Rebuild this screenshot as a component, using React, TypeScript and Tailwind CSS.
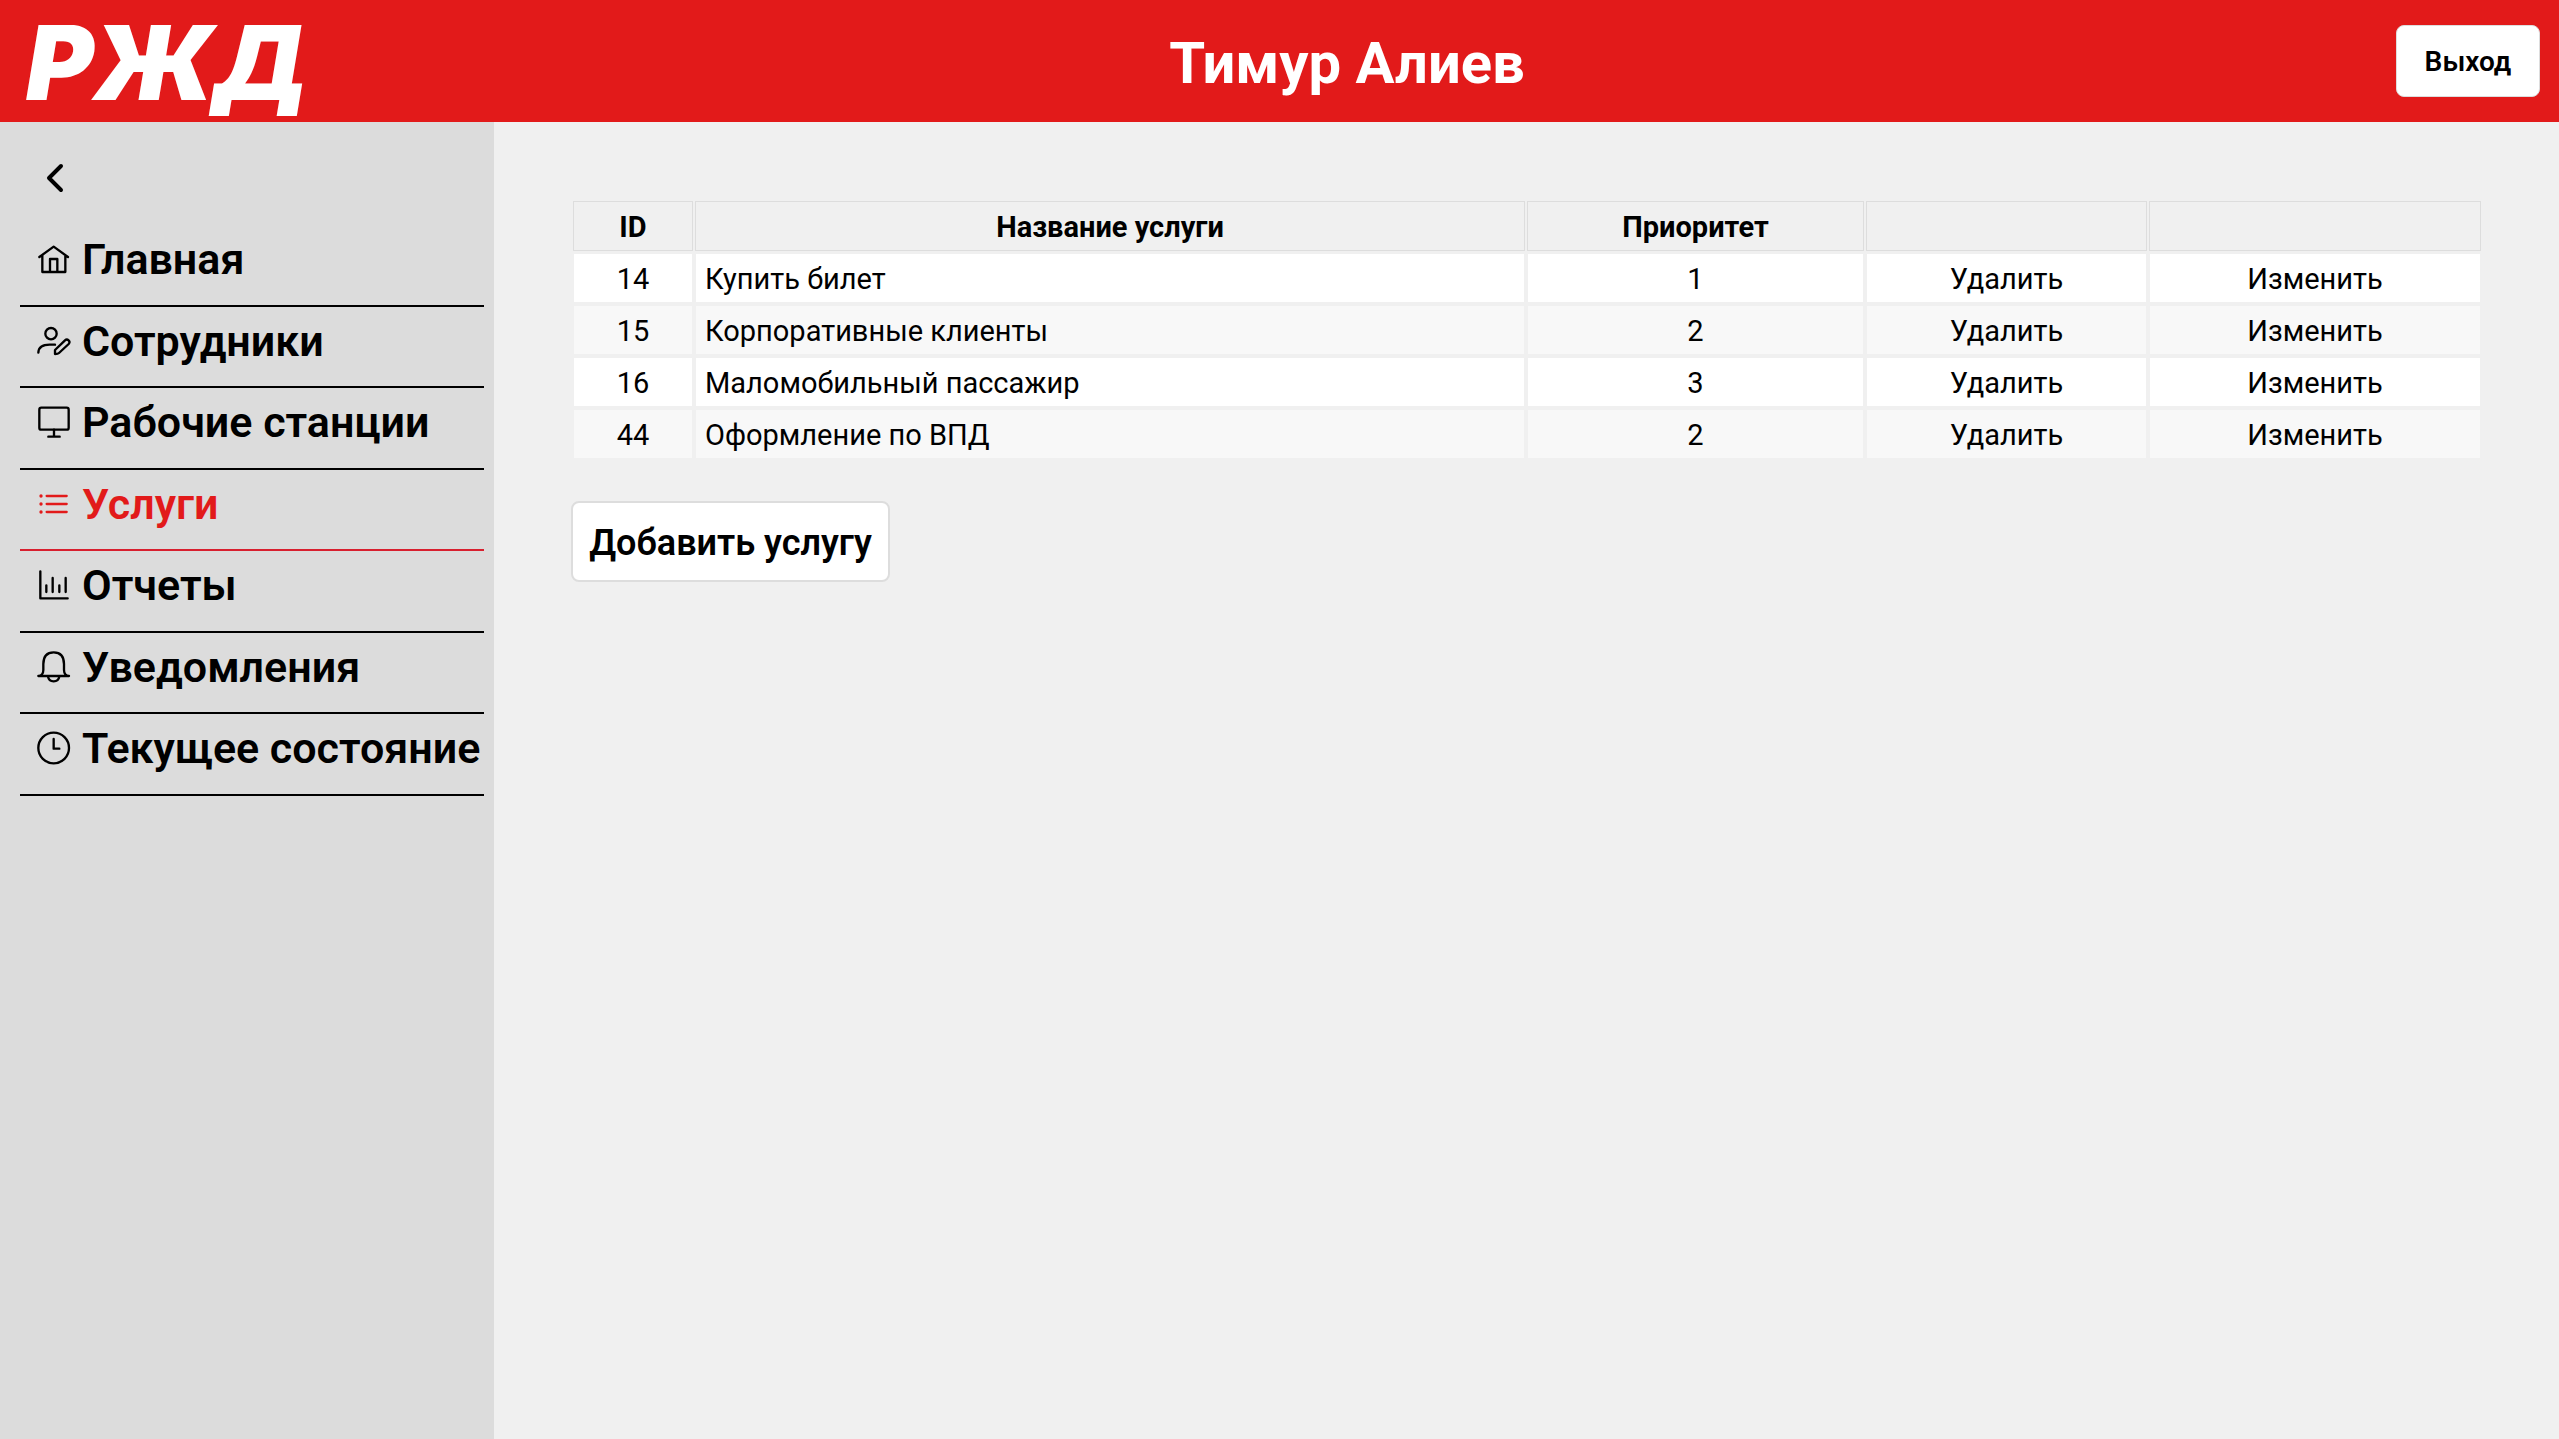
import type { ReactNode } from "react";

type NavItem = { label: string; icon: ReactNode; active?: boolean };

function Icon({ children }: { children: ReactNode }) {
  return (
    <svg
      viewBox="0 0 102 102"
      className="size-[34px] shrink-0"
      fill="none"
      stroke="currentColor"
      strokeWidth={7}
      strokeLinecap="round"
      strokeLinejoin="round"
      aria-hidden="true"
    >
      {children}
    </svg>
  );
}

const navItems: NavItem[] = [
  {
    label: "Главная",
    icon: (
      <Icon>
        <path d="M7 45 50 14l43 31M16 40v50h69V40M39 90V51h22v39" />
      </Icon>
    ),
  },
  {
    label: "Сотрудники",
    icon: (
      <Icon>
        <circle cx="42" cy="29" r="17" />
        <path d="M4 86C5 66 21 62 38 62h16" />
        <path d="M54 90V78l30-29c7-7 18 3 11 11L66 87c-3 3-7 3-12 3Z" />
      </Icon>
    ),
  },
  {
    label: "Рабочие станции",
    icon: (
      <Icon>
        <rect x="7" y="8" width="88" height="66" rx="6" />
        <path d="M51 74v20M34 95h34" />
      </Icon>
    ),
  },
  {
    label: "Услуги",
    active: true,
    icon: (
      <Icon>
        <path d="M29 27h60M29 51h60M29 75h60" />
        <path strokeWidth={10} d="M12 27h.1M12 51h.1M12 75h.1" />
      </Icon>
    ),
  },
  {
    label: "Отчеты",
    icon: (
      <Icon>
        <path d="M10 10v81h82M28 52v20M47 30v42M67 52v20M86 30v42" />
      </Icon>
    ),
  },
  {
    label: "Уведомления",
    icon: (
      <Icon>
        <path d="M4 78c9 0 15-8 15-18V42C19 20 30 7 50 7s31 13 31 35v18c0 10 6 18 15 18H4Z" />
        <path d="M33 79c3 20 31 20 34 0" />
      </Icon>
    ),
  },
  {
    label: "Текущее состояние",
    icon: (
      <Icon>
        <circle cx="50" cy="51" r="46" />
        <path d="M50 24v29h17" />
      </Icon>
    ),
  },
];

const services = [
  { id: 14, name: "Купить билет", priority: 1 },
  { id: 15, name: "Корпоративные клиенты", priority: 2 },
  { id: 16, name: "Маломобильный пассажир", priority: 3 },
  { id: 44, name: "Оформление по ВПД", priority: 2 },
];

function Header() {
  return (
    <header className="flex h-[122px] shrink-0 items-center justify-between bg-[#e21a1a] pr-[19px] pl-[26px]">
      <a
        href="#"
        className="w-[272px] pt-[2px] font-['Inter',sans-serif] text-[103px] leading-none font-black whitespace-nowrap text-white italic"
      >
        РЖД
      </a>
      <h1 className="pt-1 text-[58px] leading-none font-bold text-white">Тимур Алиев</h1>
      <button
        type="button"
        className="h-[72px] w-[144px] rounded-lg border border-[#dddddd] bg-white pt-[2px] text-[28px] font-semibold"
      >
        Выход
      </button>
    </header>
  );
}

function Sidebar() {
  return (
    <aside className="w-[494px] shrink-0 bg-[#dcdcdc] pr-[10px] pl-5">
      <button type="button" aria-label="Свернуть меню" className="flex h-[103px] w-[70px] items-center pt-[8px] pl-[24px]">
        <svg viewBox="0 0 22 32" className="h-8 w-[22px]" fill="none" stroke="black" strokeWidth={4} strokeLinecap="round" strokeLinejoin="round">
          <path d="M17 4 5 16l12 12" />
        </svg>
      </button>
      <nav>
        <ul>
          {navItems.map((item) => (
            <li key={item.label}>
              <a
                href="#"
                aria-current={item.active ? "page" : undefined}
                className={
                  item.active
                    ? "flex items-center gap-[11px] border-b-2 border-[#d8202f] pt-[2px] pb-[13px] pl-[17px] text-[#e21a1a]"
                    : "flex items-center gap-[11px] border-b-2 border-black pt-[2px] pb-[13px] pl-[17px] text-black"
                }
              >
                {item.icon}
                <span className="text-[43px] leading-normal font-semibold whitespace-nowrap">{item.label}</span>
              </a>
            </li>
          ))}
        </ul>
      </nav>
    </aside>
  );
}

function ServicesTable() {
  return (
    <table className="w-full table-fixed border-separate border-spacing-[2px] text-[29px] leading-[46px]">
      <colgroup>
        <col className="w-[120px]" />
        <col className="w-[830px]" />
        <col className="w-[337px]" />
        <col className="w-[281px]" />
        <col className="w-[332px]" />
      </colgroup>
      <thead>
        <tr>
          {["ID", "Название услуги", "Приоритет", "", ""].map((title, i) => (
            <th key={i} scope="col" className="h-[50px] border border-[#dddddd] px-0 pt-[2px] pb-0 font-bold">
              {title}
            </th>
          ))}
        </tr>
      </thead>
      <tbody>
        {services.map((s) => (
          <tr key={s.id} className="bg-white text-center even:bg-[#f8f8f8]">
            <td className="border border-[#f0f0f0] px-0 pt-[2px] pb-0">{s.id}</td>
            <td className="border border-[#f0f0f0] pt-[2px] pr-0 pb-0 pl-[9px] text-left">{s.name}</td>
            <td className="border border-[#f0f0f0] px-0 pt-[2px] pb-0">{s.priority}</td>
            <td className="border border-[#f0f0f0] px-0 pt-[2px] pb-0">
              <button type="button" className="block w-full">Удалить</button>
            </td>
            <td className="border border-[#f0f0f0] px-0 pt-[2px] pb-0">
              <button type="button" className="block w-full">Изменить</button>
            </td>
          </tr>
        ))}
      </tbody>
    </table>
  );
}

export default function App() {
  return (
    <div className="flex min-h-screen flex-col bg-[#f0f0f0] font-['Roboto',sans-serif] text-black">
      <Header />
      <div className="flex grow">
        <Sidebar />
        <main className="min-w-0 grow px-[77px] pt-[77px]">
          <ServicesTable />
          <button
            type="button"
            className="mt-10 h-[81px] w-[319px] rounded-lg border-2 border-[#dddddd] bg-white pt-[2px] text-[36px] font-semibold"
          >
            Добавить услугу
          </button>
        </main>
      </div>
    </div>
  );
}
